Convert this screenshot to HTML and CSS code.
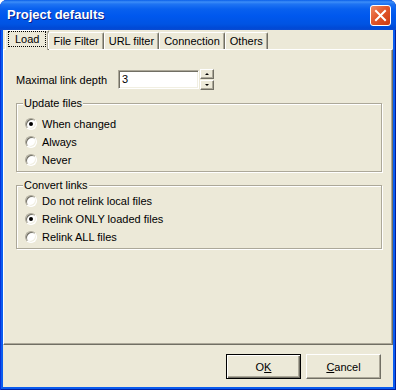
FILE: index.html
```html
<!DOCTYPE html>
<html lang="en">
<head>
  <meta charset="UTF-8" />
  <title>Project defaults</title>
  <link rel="stylesheet" href="styles.css">
</head>
<body>
  <div class="window">
    <div class="titlebar">
      <span class="title">Project defaults</span>
      <button class="close" title="Close">
        <svg width="13" height="13" viewBox="0 0 13 13">
          <path d="M2 2 L11 11 M11 2 L2 11" stroke="#fff" stroke-width="2" stroke-linecap="square" />
        </svg>
      </button>
    </div>

    <div class="client">
      <div class="tabs">
        <div class="tab active"><span class="focus">Load</span></div>
        <div class="tab">File Filter</div>
        <div class="tab">URL filter</div>
        <div class="tab">Connection</div>
        <div class="tab">Others</div>
      </div>

      <div class="panel">
        <div class="depth">
          <label>Maximal link depth</label>
          <div class="edit">3</div>
          <div class="spin">
            <span class="arrow up"></span>
            <span class="arrow down"></span>
          </div>
        </div>

        <fieldset class="group update">
          <legend>Update files</legend>
          <div class="radio"><span class="dot checked"></span>When changed</div>
          <div class="radio"><span class="dot"></span>Always</div>
          <div class="radio"><span class="dot"></span>Never</div>
        </fieldset>

        <fieldset class="group convert">
          <legend>Convert links</legend>
          <div class="radio"><span class="dot"></span>Do not relink local files</div>
          <div class="radio"><span class="dot checked"></span>Relink ONLY loaded files</div>
          <div class="radio"><span class="dot"></span>Relink ALL files</div>
        </fieldset>
      </div>

      <div class="footer">
        <button class="btn default">O<u>K</u></button>
        <button class="btn"><u>C</u>ancel</button>
      </div>
    </div>
  </div>
</body>
</html>
```

FILE: styles.css
```css
html, body {
  margin: 0;
  padding: 0;
  background: #fff;
}

body {
  font-family: "Liberation Sans", Arial, sans-serif;
  font-size: 11px;
  color: #000;
}

.window {
  width: 396px;
  height: 390px;
  background: #0a5cef;
  border-radius: 7px 7px 0 0;
  box-shadow: inset 1px 0 0 #0831d9, inset -1px 0 0 #001ea0, inset 0 -1px 0 #001ea0;
  display: flex;
  flex-direction: column;
  overflow: hidden;
}

.titlebar {
  height: 30px;
  flex: none;
  display: flex;
  align-items: center;
  justify-content: space-between;
  padding: 0 5px 0 7px;
  background: linear-gradient(to bottom, #0a5fe9 0, #3d8ef8 2px, #1f74f3 4px, #0860ef 9px, #0058ee 16px, #0054e3 24px, #0049d6 28px, #0a4bd0 30px);
}

.title {
  color: #fff;
  font-weight: bold;
  font-size: 13px;
  text-shadow: 1px 1px 0 #0a1f8c;
  padding-bottom: 1px;
}

.close {
  width: 21px;
  height: 21px;
  padding: 0;
  border: 1px solid #fff;
  border-radius: 3px;
  background: linear-gradient(135deg, #f08a63 0%, #e2572b 45%, #cc3a10 100%);
  display: flex;
  align-items: center;
  justify-content: center;
  margin-top: 1px;
}

.client {
  flex: 1;
  margin: 0 3px 3px 3px;
  background: #ece9d8;
  display: flex;
  flex-direction: column;
}

/* tab strip */
.tabs {
  height: 19px;
  padding-left: 2px;
  display: flex;
  align-items: flex-end;
  position: relative;
  z-index: 1;
}

.tab {
  height: 16px;
  line-height: 16px;
  padding: 0 4px;
  border: 1px solid #fff;
  border-bottom: none;
  border-right-color: #716f64;
  box-shadow: inset -1px 0 0 #aca899;
  border-radius: 2px 2px 0 0;
  background: #ece9d8;
  white-space: nowrap;
}

.tab.active {
  height: 19px;
  line-height: 17px;
  padding: 0 2px;
  margin-bottom: -1px;
  margin-right: -1px;
}

.focus {
  display: inline-block;
  border: 1px dotted #000;
  line-height: 14px;
  padding: 0 6px;
}

/* tab page */
.panel {
  height: 294px;
  flex: none;
  border: 1px solid #fff;
  border-right-color: #716f64;
  border-bottom-color: #716f64;
  box-shadow: inset -1px -1px 0 #aca899;
  display: flex;
  flex-direction: column;
}

.depth {
  display: flex;
  align-items: center;
  margin: 19px 0 0 12px;
  height: 21px;
}

.depth label {
  width: 102px;
}

.edit {
  width: 77px;
  height: 17px;
  line-height: 17px;
  padding-left: 2px;
  box-sizing: content-box;
  border: 1px solid;
  border-color: #aca899 #fff #fff #aca899;
  box-shadow: inset 1px 1px 0 #716f64, inset -1px -1px 0 #f1efe2;
  background: #fff;
  text-indent: 1px;
}

.spin {
  margin-left: 1px;
  width: 14px;
  height: 21px;
  display: flex;
  flex-direction: column;
  gap: 1px;
}

.arrow {
  flex: 1;
  box-sizing: border-box;
  border: 1px solid;
  border-color: #fff #716f64 #716f64 #fff;
  box-shadow: inset -1px -1px 0 #aca899;
  background: #ece9d8;
  display: flex;
  align-items: center;
  justify-content: center;
}

.arrow::after {
  content: "";
  border-left: 2px solid transparent;
  border-right: 2px solid transparent;
}

.up::after {
  border-bottom: 2px solid #000;
}

.down::after {
  border-top: 2px solid #000;
}

/* group boxes */
.group {
  margin: 7px 10px 0 12px;
  padding: 0 8px 2px 8px;
  border: 1px solid #aca899;
  box-shadow: 1px 1px 0 #fff, inset 1px 1px 0 #fff;
}

.group legend {
  padding: 0 1px;
  margin-left: -2px;
  line-height: 13px;
  background: #ece9d8;
}

.update {
  padding-top: 5px;
}

.convert {
  margin-top: 7px;
  padding-top: 0;
}

.radio {
  height: 18px;
  display: flex;
  align-items: center;
  gap: 5px;
}

.dot {
  width: 12px;
  height: 12px;
  box-sizing: border-box;
  border-radius: 50%;
  border: 1px solid;
  border-color: #aca899 #fff #fff #aca899;
  box-shadow: inset 1px 1px 0 #716f64, inset -1px -1px 0 #f1efe2;
  background: #fff;
  display: flex;
  align-items: center;
  justify-content: center;
}

.dot.checked::after {
  content: "";
  width: 4px;
  height: 4px;
  border-radius: 50%;
  background: #000;
}

/* dialog buttons */
.footer {
  display: flex;
  justify-content: flex-end;
  gap: 5px;
  padding: 9px 12px 0 0;
}

.btn {
  width: 75px;
  height: 25px;
  padding: 0;
  font: inherit;
  color: #000;
  background: #ece9d8;
  border: 1px solid;
  border-color: #fff #716f64 #716f64 #fff;
  box-shadow: inset -1px -1px 0 #aca899;
}

.btn.default {
  border-color: #000;
  box-shadow: inset 1px 1px 0 #fff, inset -1px -1px 0 #716f64, inset -2px -2px 0 #aca899;
}
```
